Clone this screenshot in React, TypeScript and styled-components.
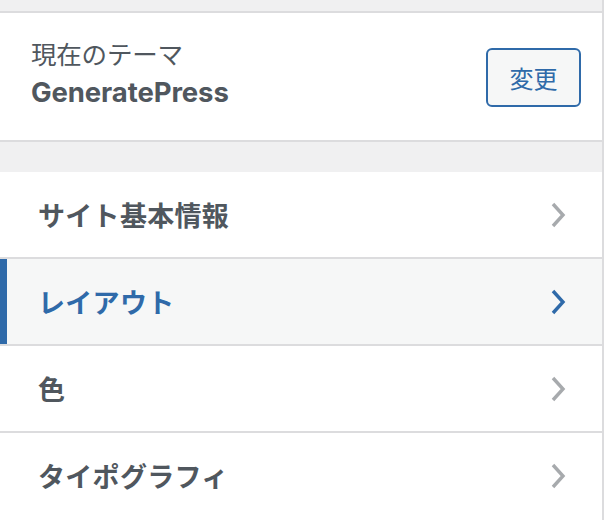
import React from 'react'
import styled, { createGlobalStyle } from 'styled-components'

const GlobalStyle = createGlobalStyle`
  body {
    margin: 0;
    background: #ffffff;
    font-family: Inter, "Noto Sans CJK JP", "Noto Sans", sans-serif;
  }
`;

const StyledPanel = styled.div`
  width: 602px;
  height: 520px;
  overflow: hidden;
  border-right: 2px solid #dcdcde;
  display: flex;
  flex-direction: column;
  background: #ffffff;
`;

const StyledGap = styled.div<{ $h: number }>`
  height: ${({ $h }) => $h}px;
  flex-shrink: 0;
  background-color: #f0f0f1;
`;

const StyledTheme = styled.section`
  flex-shrink: 0;
  height: 127px;
  display: flex;
  align-items: center;
  justify-content: space-between;
  padding: 0 21px 0 31px;
  border-top: 2px solid #dcdcde;
  border-bottom: 2px solid #dcdcde;
  background-color: #ffffff;
`;

const StyledThemeInfo = styled.div`
  display: flex;
  flex-direction: column;
  margin-top: -6px;
`;

const StyledThemeLabel = styled.span`
  font-size: 25.5px;
  line-height: 36px;
  color: #50575e;
  letter-spacing: -0.2px;
`;

const StyledThemeName = styled.span`
  font-size: 27.5px;
  font-weight: 700;
  line-height: 38px;
  color: #50575e;
  letter-spacing: -0.1px;
`;

const StyledButton = styled.button`
  width: 95px;
  height: 59px;
  margin-top: 2px;
  border: 2px solid #2f6aa9;
  border-radius: 6px;
  background-color: #f6f7f7;
  color: #2f6aa9;
  font-family: inherit;
  font-size: 24px;
  padding: 0;
  cursor: pointer;
`;

const StyledMenu = styled.nav`
  display: flex;
  flex-direction: column;
`;

const StyledRow = styled.div<{ $active?: boolean }>`
  flex-shrink: 0;
  height: 85px;
  display: flex;
  align-items: center;
  justify-content: space-between;
  padding: 0 36px 0 38px;
  border-bottom: 2px solid #dcdcde;
  background-color: ${({ $active }) => ($active ? '#f6f7f7' : '#ffffff')};
  box-shadow: ${({ $active }) => ($active ? 'inset 7px 0 0 #2f6aa9' : 'none')};
  color: ${({ $active }) => ($active ? '#2f6aa9' : '#50575e')};

  &:last-child {
    border-bottom: none;
  }
`;

const StyledRowText = styled.span`
  font-size: 27px;
  font-weight: 700;
  letter-spacing: 0.3px;
`;

const StyledChevron = styled.svg<{ $active?: boolean }>`
  width: 16px;
  height: 28px;
  color: ${({ $active }) => ($active ? '#2f6aa9' : '#a7aaad')};
`;

const Chevron = ({ active }: { active?: boolean }) => (
  <StyledChevron $active={active} viewBox="0 0 16 28">
    <polyline
      points="3,3 13,14 3,25"
      fill="none"
      stroke="currentColor"
      strokeWidth="3.4"
    />
  </StyledChevron>
);

const items = [
  { label: 'サイト基本情報' },
  { label: 'レイアウト', active: true },
  { label: '色' },
  { label: 'タイポグラフィ' },
];

const App: React.FC = () => {
  return (
    <>
      <GlobalStyle />
      <StyledPanel>
        <StyledGap $h={11} />
        <StyledTheme>
          <StyledThemeInfo>
            <StyledThemeLabel>現在のテーマ</StyledThemeLabel>
            <StyledThemeName>GeneratePress</StyledThemeName>
          </StyledThemeInfo>
          <StyledButton>変更</StyledButton>
        </StyledTheme>
        <StyledGap $h={30} />
        <StyledMenu>
          {items.map((item) => (
            <StyledRow key={item.label} $active={item.active}>
              <StyledRowText>{item.label}</StyledRowText>
              <Chevron active={item.active} />
            </StyledRow>
          ))}
        </StyledMenu>
      </StyledPanel>
    </>
  )
}

export default App
